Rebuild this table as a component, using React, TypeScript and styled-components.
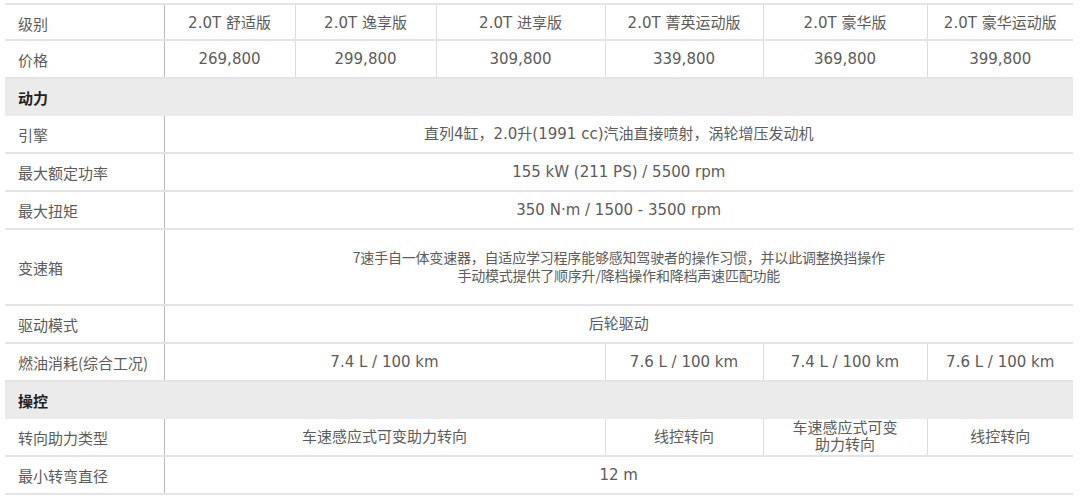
import React from "react";
import styled, { createGlobalStyle } from "styled-components";

const GlobalStyle = createGlobalStyle`
  body {
    margin: 0;
    background: #ffffff;
    font-family: "DejaVu Sans", "Noto Sans CJK SC", sans-serif;
  }
`;

const Page = styled.div`
  padding: 3px 7px 0 5px;
`;

const Table = styled.table`
  width: 1068px;
  table-layout: fixed;
  border-collapse: collapse;
  color: #5c5c5c;
  font-size: 15px;
`;

const Row = styled.tr<{ $top?: boolean }>`
  border-bottom: 2px solid #e4e4e4;
  border-top: ${(p) => (p.$top ? "2px solid #e4e4e4" : "none")};

  & > td {
    ${(p) => (p.$top ? "height: 32px; padding-top: 2px;" : "")}
  }
`;

const LabelCell = styled.td`
  height: 36px;
  padding: 0 0 0 13px;
  text-align: left;
  border-right: 1px solid #b8b8b8;
  white-space: nowrap;
  font-family: "Noto Sans CJK SC", sans-serif;
`;

const ValueCell = styled.td<{ $tall?: boolean }>`
  height: ${(p) => (p.$tall ? "74px" : "36px")};
  padding: 0 4px;
  text-align: center;
  border-left: 1px solid #dcdcdc;
  line-height: 17px;
`;

const Note = styled.span`
  font-family: "Noto Sans CJK SC", sans-serif;
  font-size: 14px;
  line-height: 17px;
  letter-spacing: -0.2px;
`;

const SectionRow = styled.tr`
  background: #ebebeb;
`;

const SectionCell = styled.td`
  height: 37px;
  padding: 0 0 0 13px;
  font-family: "Noto Sans CJK SC", sans-serif;
  font-weight: 700;
  color: #222;
`;

const widths = [159, 131, 141, 169, 158, 164, 146];

const trims = [
  "2.0T 舒适版",
  "2.0T 逸享版",
  "2.0T 进享版",
  "2.0T 菁英运动版",
  "2.0T 豪华版",
  "2.0T 豪华运动版",
];

const prices = ["269,800", "299,800", "309,800", "339,800", "369,800", "399,800"];

const App = () => (
  <>
    <GlobalStyle />
    <Page>
      <Table>
        <colgroup>
          {widths.map((w, i) => (
            <col key={i} style={{ width: w }} />
          ))}
        </colgroup>
        <tbody>
          <Row $top>
            <LabelCell>级别</LabelCell>
            {trims.map((t) => (
              <ValueCell key={t}>{t}</ValueCell>
            ))}
          </Row>
          <Row>
            <LabelCell>价格</LabelCell>
            {prices.map((p) => (
              <ValueCell key={p}>{p}</ValueCell>
            ))}
          </Row>
          <SectionRow>
            <SectionCell colSpan={7}>动力</SectionCell>
          </SectionRow>
          <Row>
            <LabelCell>引擎</LabelCell>
            <ValueCell colSpan={6}>
              直列4缸，2.0升(1991 cc)汽油直接喷射，涡轮增压发动机
            </ValueCell>
          </Row>
          <Row>
            <LabelCell>最大额定功率</LabelCell>
            <ValueCell colSpan={6}>155 kW (211 PS) / 5500 rpm</ValueCell>
          </Row>
          <Row>
            <LabelCell>最大扭矩</LabelCell>
            <ValueCell colSpan={6}>350 N·m / 1500 - 3500 rpm</ValueCell>
          </Row>
          <Row>
            <LabelCell>变速箱</LabelCell>
            <ValueCell colSpan={6} $tall>
              <Note>
                7速手自一体变速器，自适应学习程序能够感知驾驶者的操作习惯，并以此调整换挡操作
                <br />
                手动模式提供了顺序升/降档操作和降档声速匹配功能
              </Note>
            </ValueCell>
          </Row>
          <Row>
            <LabelCell>驱动模式</LabelCell>
            <ValueCell colSpan={6}>后轮驱动</ValueCell>
          </Row>
          <Row>
            <LabelCell>燃油消耗(综合工况)</LabelCell>
            <ValueCell colSpan={3}>7.4 L / 100 km</ValueCell>
            <ValueCell>7.6 L / 100 km</ValueCell>
            <ValueCell>7.4 L / 100 km</ValueCell>
            <ValueCell>7.6 L / 100 km</ValueCell>
          </Row>
          <SectionRow>
            <SectionCell colSpan={7}>操控</SectionCell>
          </SectionRow>
          <Row>
            <LabelCell>转向助力类型</LabelCell>
            <ValueCell colSpan={3}>车速感应式可变助力转向</ValueCell>
            <ValueCell>线控转向</ValueCell>
            <ValueCell>
              车速感应式可变
              <br />
              助力转向
            </ValueCell>
            <ValueCell>线控转向</ValueCell>
          </Row>
          <Row>
            <LabelCell>最小转弯直径</LabelCell>
            <ValueCell colSpan={6}>12 m</ValueCell>
          </Row>
        </tbody>
      </Table>
    </Page>
  </>
);

export default App;
